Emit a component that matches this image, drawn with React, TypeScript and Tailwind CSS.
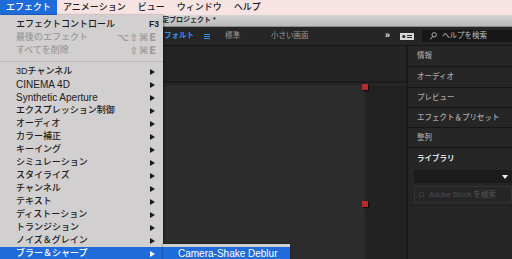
import React from "react";

const FONT = "font-['Liberation_Sans','Noto_Sans_CJK_JP',sans-serif]";
const SYM = "font-['DejaVu_Sans','Noto_Sans_CJK_JP',sans-serif]";

type Item = { label: string; latin?: boolean };

const SUBMENUS: Item[] = [
  { label: "3Dチャンネル" },
  { label: "CINEMA 4D", latin: true },
  { label: "Synthetic Aperture", latin: true },
  { label: "エクスプレッション制御" },
  { label: "オーディオ" },
  { label: "カラー補正" },
  { label: "キーイング" },
  { label: "シミュレーション" },
  { label: "スタイライズ" },
  { label: "チャンネル" },
  { label: "テキスト" },
  { label: "ディストーション" },
  { label: "トランジション" },
  { label: "ノイズ＆グレイン" },
  { label: "ブラー＆シャープ" },
];

const PANELS = ["情報", "オーディオ", "プレビュー", "エフェクト＆プリセット", "整列"];

function Arrow({ white }: { white?: boolean }) {
  return (
    <svg width="5" height="6" viewBox="0 0 5 6" className="shrink-0">
      <path d="M0 0 L5 3 L0 6 Z" fill={white ? "#ffffff" : "#1a1a1a"} />
    </svg>
  );
}

function EffectMenu() {
  return (
    <div className="absolute left-0 top-[15px] h-[244px] w-[163px] bg-[#d1cfcf] pt-[3px] font-medium shadow-[1px_0_2px_rgba(0,0,0,0.4)]">
      <div className="flex h-[13px] items-center pl-[16px] pr-[4px] text-[9px] text-[#1c1c1c]">
        <span>エフェクトコントロール</span>
        <span className="ml-auto text-[8.5px] font-bold">F3</span>
      </div>
      <div className="flex h-[13px] items-center pl-[16px] pr-[6px] text-[9px] text-[#9c9a9a]">
        <span>最後のエフェクト</span>
        <span className={`${SYM} ml-auto text-[10px] font-bold tracking-[1px]`}>⌥⇧⌘E</span>
      </div>
      <div className="flex h-[13px] items-center pl-[16px] pr-[6px] text-[9px] text-[#9c9a9a]">
        <span>すべてを削除</span>
        <span className={`${SYM} ml-auto text-[10px] font-bold tracking-[1px]`}>⇧⌘E</span>
      </div>
      <div className="flex h-[8px] items-center">
        <div className="h-px w-full bg-[#bab8b8]" />
      </div>
      {SUBMENUS.map((it, i) => {
        const active = i === SUBMENUS.length - 1;
        return (
          <div
            key={it.label}
            className={`flex h-[13px] items-center justify-between pl-[16px] pr-[8px] ${
              active ? "bg-[#1e6bd9] text-white" : "text-[#1c1c1c]"
            } ${it.latin ? "text-[10px]" : "text-[9px]"}`}
          >
            <span>{it.label}</span>
            <Arrow white={active} />
          </div>
        );
      })}
    </div>
  );
}

export default function App() {
  return (
    <div className={`relative h-[259px] w-[512px] overflow-hidden bg-[#232323] ${FONT}`}>
      {/* menu bar */}
      <div className="flex h-[15px] items-center bg-[#f6e3e2] text-[9px] font-medium text-[#1c1c1c]">
        <div className="flex h-full items-center bg-[#1e6bd9] px-[6px] text-white">エフェクト</div>
        <div className="px-[6px]">アニメーション</div>
        <div className="px-[6px]">ビュー</div>
        <div className="px-[6px]">ウィンドウ</div>
        <div className="px-[6px]">ヘルプ</div>
      </div>

      {/* window title (left part hidden behind the open menu) */}
      <div className="flex h-[12px] items-center border-b border-[#8c8c8c] bg-gradient-to-b from-[#d4d4d4] to-[#bababa] pl-[162px] text-[7px] font-bold text-[#2a2a2a]">
        定プロジェクト *
      </div>

      {/* toolbar */}
      <div className="flex h-[18px] items-center bg-[#262626] text-[7.5px] text-[#9a9a9a]">
        <div className="w-[164px] shrink-0" />
        <span className="font-bold text-[#3590ec]">フォルト</span>
        <svg width="6" height="5" viewBox="0 0 6 5" className="ml-[10px]">
          <rect x="0" y="0" width="6" height="1" fill="#3590ec" />
          <rect x="0" y="2" width="6" height="1" fill="#3590ec" />
          <rect x="0" y="4" width="6" height="1" fill="#3590ec" />
        </svg>
        <span className="ml-[15px]">標準</span>
        <span className="ml-[31px]">小さい画面</span>
        <span className="ml-auto text-[9px] font-bold text-[#e6e6e6]">»</span>
        <svg width="14" height="7" viewBox="0 0 14 7" className="ml-[10px]">
          <rect x="0.5" y="0.5" width="13" height="6" fill="#d8d8d8" stroke="#d8d8d8" />
          <circle cx="3.8" cy="3.5" r="1.6" fill="#262626" />
          <rect x="7" y="2" width="5" height="1" fill="#262626" />
          <rect x="7" y="4" width="5" height="1" fill="#262626" />
        </svg>
        <div className="ml-[8px] flex h-[12px] w-[90px] items-center bg-[#181818] pl-[8px] text-[#bdbdbd]">
          <svg width="7" height="8" viewBox="0 0 7 8">
            <circle cx="4.2" cy="2.8" r="2.2" fill="none" stroke="#bdbdbd" strokeWidth="0.9" />
            <path d="M2.6 4.5 L0.5 7.3" stroke="#bdbdbd" strokeWidth="1" />
          </svg>
          <span className="ml-[5px]">ヘルプを検索</span>
        </div>
      </div>

      {/* main */}
      <div className="flex h-[214px] border-t border-[#151515]">
        <div className="flex flex-1 flex-col">
          <div className="h-[35px] bg-[#242424]" />
          <div className="h-[2px] bg-[#1b1b1b]" />
          <div className="h-[3px] bg-[#262626]" />
          <div className="relative flex flex-1">
            <div className="w-[365px] bg-[#2c2c2c]" />
            <div className="flex-1 bg-[#222222]" />
            <div className="absolute left-[362px] top-[-2px] h-[6px] w-[6px] bg-[#b32b2b] shadow-[1px_1px_1px_rgba(0,0,0,0.6)]" />
            <div className="absolute left-[362px] top-[115px] h-[6px] w-[6px] bg-[#b32b2b] shadow-[1px_1px_1px_rgba(0,0,0,0.6)]" />
          </div>
        </div>
        <div className="w-[2px] bg-[#1a1a1a]" />
        <div className="flex w-[104px] flex-col bg-[#262626] text-[7.5px] font-medium text-[#a5a5a5]">
          {PANELS.map((p, i) => (
            <div
              key={p}
              className={`flex ${i < 2 ? "h-[21px]" : "h-[20px]"} items-center border-b border-[#171717] pl-[9px]`}
            >
              {p}
            </div>
          ))}
          <div className="flex h-[22px] items-center pl-[9px] font-bold text-[#e2e2e2]">ライブラリ</div>
          <div className="ml-[6px] flex h-[13px] items-center justify-end bg-[#1c1c1c] pr-[4px]">
            <svg width="6" height="4" viewBox="0 0 6 4">
              <path d="M0 0 H6 L3 4 Z" fill="#f0f0f0" />
            </svg>
          </div>
          <div className="ml-[6px] mt-[3px] flex h-[17px] items-center border border-[#333333] pl-[4px] text-[#4e4e4e]">
            <div className="h-[5px] w-[5px] rounded-[1px] border border-[#3a3a3a]" />
            <span className="ml-[5px]">Adobe Stock を検索</span>
          </div>
          <div className="mt-[2px] h-px bg-[#1f1f1f]" />
        </div>
      </div>

      <EffectMenu />

      {/* submenu */}
      <div className="absolute left-[163px] top-[244px] w-[127px] bg-[#cfcfcf] pt-[3px] shadow-[0_0_2px_rgba(0,0,0,0.5)]">
        <div className="flex h-[13px] items-center bg-[#1e6bd9] pl-[15px] text-[10px] font-medium text-white">
          Camera-Shake Deblur
        </div>
      </div>
    </div>
  );
}
